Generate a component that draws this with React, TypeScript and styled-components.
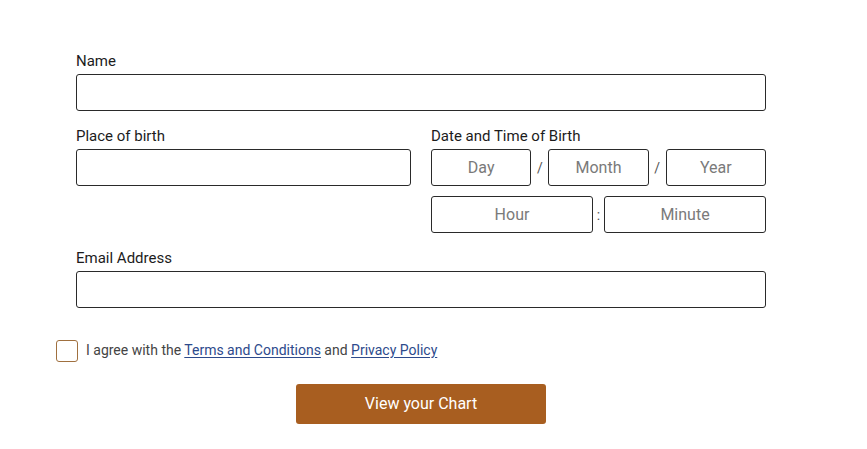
import React, { useState } from 'react'
import styled, { createGlobalStyle } from 'styled-components'

const GlobalStyle = createGlobalStyle`
	body {
		margin: 0;
		background: #ffffff;
		font-family: Roboto, 'Liberation Sans', sans-serif;
	}
`

const Page = styled.form`
	width: 730px;
	margin-left: 56px;
	padding-top: 52px;
	display: flex;
	flex-direction: column;
`
const Fields = styled.div`
	padding: 0 20px;
	display: flex;
	flex-direction: column;
	gap: 16px;
`
const Row = styled.div`
	display: flex;
	gap: 20px;
`
const Field = styled.div`
	flex: 1;
	display: flex;
	flex-direction: column;
	gap: 4px;
	min-width: 0;
`
const Label = styled.label`
	font-size: 15px;
	line-height: 18px;
	color: #1c1c1c;
`
const Input = styled.input<{ $centered?: boolean }>`
	box-sizing: border-box;
	height: 37px;
	width: 100%;
	border: 1px solid #2a2a2a;
	border-radius: 3px;
	padding: 0 10px;
	font-family: Roboto, 'Liberation Sans', sans-serif;
	font-size: 16px;
	color: #222;
	text-align: ${p => (p.$centered ? 'center' : 'left')};
	outline: none;
	&::placeholder {
		color: #7a7a7a;
	}
`
const Stack = styled.div`
	display: flex;
	flex-direction: column;
	gap: 10px;
`
const Inline = styled.div`
	display: flex;
	align-items: center;
`
const Sep = styled.span<{ $w: number }>`
	width: ${p => p.$w}px;
	flex: none;
	text-align: center;
	font-size: 14px;
	color: #555;
`
const Agree = styled.label`
	margin-top: 32px;
	display: flex;
	align-items: center;
	gap: 8px;
	font-size: 14px;
	line-height: 20px;
	color: #444;
`
const AgreeText = styled.span`
	margin-top: -2px;
`
const Box = styled.span<{ $on: boolean }>`
	box-sizing: border-box;
	width: 22px;
	height: 22px;
	border: 1px solid #a0703f;
	border-radius: 3px;
	background: ${p => (p.$on ? '#a85d1f' : '#fff')};
	flex: none;
`
const Link = styled.a`
	color: #2d4a8c;
	text-decoration: underline;
	text-underline-offset: 2px;
`
const Submit = styled.button.attrs({ type: 'submit' })`
	align-self: center;
	margin-top: 22px;
	width: 250px;
	height: 40px;
	padding: 0 0 2px;
	border: none;
	border-radius: 3px;
	background: #a85e20;
	color: #fff;
	font-family: Roboto, 'Liberation Sans', sans-serif;
	font-size: 16px;
	cursor: pointer;
`

const App: React.FC = () => {
	const [agreed, setAgreed] = useState(false)

	return (
		<>
			<GlobalStyle />
			<Page onSubmit={e => e.preventDefault()}>
				<Fields>
					<Field>
						<Label htmlFor="name">Name</Label>
						<Input id="name" />
					</Field>
					<Row>
						<Field>
							<Label htmlFor="place">Place of birth</Label>
							<Input id="place" />
						</Field>
						<Field>
							<Label>Date and Time of Birth</Label>
							<Stack>
								<Inline>
									<Input $centered placeholder="Day" />
									<Sep $w={17}>/</Sep>
									<Input $centered placeholder="Month" />
									<Sep $w={17}>/</Sep>
									<Input $centered placeholder="Year" />
								</Inline>
								<Inline>
									<Input $centered placeholder="Hour" />
									<Sep $w={11}>:</Sep>
									<Input $centered placeholder="Minute" />
								</Inline>
							</Stack>
						</Field>
					</Row>
					<Field>
						<Label htmlFor="email">Email Address</Label>
						<Input id="email" type="email" />
					</Field>
				</Fields>
				<Agree onClick={() => setAgreed(a => !a)}>
					<Box $on={agreed} />
					<AgreeText>
						I agree with the <Link href="#">Terms and Conditions</Link> and{' '}
						<Link href="#">Privacy Policy</Link>
					</AgreeText>
				</Agree>
				<Submit>View your Chart</Submit>
			</Page>
		</>
	)
}

export default App
